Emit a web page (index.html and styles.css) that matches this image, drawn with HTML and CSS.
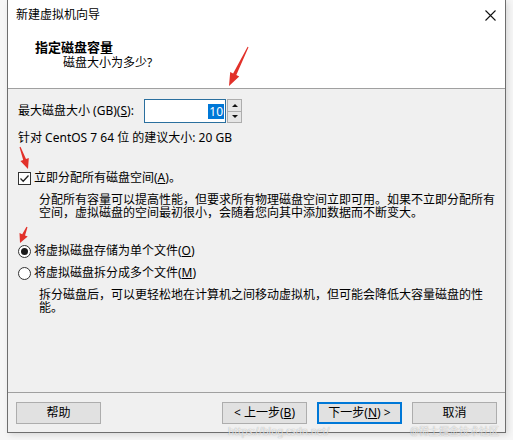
FILE: index.html
```html
<!DOCTYPE html>
<html lang="zh-CN">
<head>
<meta charset="utf-8">
<title>新建虚拟机向导</title>
<link rel="stylesheet" href="styles.css">
</head>
<body>
<div class="window">
  <div class="titlebar">
    <span class="title">新建虚拟机向导</span>
    <svg class="close" width="11" height="11" viewBox="0 0 11 11"><path d="M0.5 0.5 L10.5 10.5 M10.5 0.5 L0.5 10.5" stroke="#111" stroke-width="1.1" fill="none"/></svg>
  </div>
  <div class="header">
    <div class="h-title">指定磁盘容量</div>
    <div class="h-sub">磁盘大小为多少?</div>
  </div>
  <div class="content">
    <div class="size-row">
      <label class="size-label">最大磁盘大小 (GB)(<u>S</u>):</label>
      <div class="edit"><span class="sel">10</span></div>
      <div class="spin-btns"><span class="up"></span><span class="down"></span></div>
    </div>
    <div class="hint">针对 CentOS 7 64 位 的建议大小: 20 GB</div>
    <div class="option check-row">
      <span class="checkbox"><svg width="11" height="11" viewBox="0 0 11 11"><path d="M1.5 5.5 L4.2 8.2 L9.5 2.5" stroke="#222" stroke-width="1.3" fill="none"/></svg></span>
      <span>立即分配所有磁盘空间(<u>A</u>)。</span>
    </div>
    <p class="desc">分配所有容量可以提高性能，但要求所有物理磁盘空间立即可用。如果不立即分配所有<br>空间，虚拟磁盘的空间最初很小，会随着您向其中添加数据而不断变大。</p>
    <div class="option radio-row first">
      <span class="radio on"></span>
      <span>将虚拟磁盘存储为单个文件(<u>O</u>)</span>
    </div>
    <div class="option radio-row">
      <span class="radio"></span>
      <span>将虚拟磁盘拆分成多个文件(<u>M</u>)</span>
    </div>
    <p class="desc">拆分磁盘后，可以更轻松地在计算机之间移动虚拟机，但可能会降低大容量磁盘的性<br>能。</p>
  </div>
  <div class="footer">
    <button class="btn">帮助</button>
    <button class="btn back">&lt; 上一步(<u>B</u>)</button>
    <button class="btn primary">下一步(<u>N</u>) &gt;</button>
    <button class="btn">取消</button>
  </div>
</div>
<svg class="annotations" width="513" height="440" viewBox="0 0 513 440">
  <polygon fill="#e2312a" points="248.5,47.2 236.3,75.1 239.2,76.5 229,86 230.2,72.1 233.1,73.5 247.6,46.8"/>
  <polygon fill="#e2312a" points="20.5,146.8 26,159.1 28.8,158.1 28,169 20.4,161.1 23.2,160.1 19.5,147.2"/>
  <polygon fill="#e2312a" points="27.5,227.2 25,235.4 27.7,236.6 20,243 19.5,233 22.2,234.2 26.5,226.8"/>
</svg>
<div class="watermark"><span class="wm-url">https://blog.csdn.net/</span><span class="wm-brand">@稀土掘金技术社区</span></div>
</body>
</html>
```
FILE: styles.css
```css
* { box-sizing: border-box; }

body {
  margin: 0;
  width: 513px;
  height: 440px;
  overflow: hidden;
  position: relative;
  background: #f6f6f6;
  font-family: "Noto Sans", "Noto Sans CJK SC", sans-serif;
  font-size: 12px;
  color: #000;
}

.window {
  margin-left: 7px;
  width: 499px;
  height: 433px;
  border: 1px solid #6e6e6e;
  border-top: none;
  background: #f0f0f0;
  display: flex;
  flex-direction: column;
  box-shadow: 2px 2px 6px rgba(0, 0, 0, 0.12);
}

.titlebar {
  height: 30px;
  background: #fff;
  display: flex;
  align-items: center;
  justify-content: space-between;
  padding: 0 9px 0 8px;
  line-height: 16px;
}

.close { display: block; }

.header {
  height: 59px;
  background: #fff;
  border-bottom: 1px solid #a0a0a0;
  padding: 9px 0 0 27px;
}

.h-title {
  font-weight: bold;
  font-size: 13px;
  line-height: 16px;
}

.h-sub {
  margin-left: 28px;
  line-height: 16px;
}

.content {
  flex: 1;
  padding: 10px 0 0 10px;
}

.size-row {
  display: flex;
  align-items: center;
  height: 24px;
}

.size-label {
  flex: 0 0 126px;
  line-height: 16px;
}

.edit {
  width: 82px;
  height: 24px;
  border: 1px solid #2a6f9e;
  background: #fff;
  display: flex;
  align-items: center;
  justify-content: flex-end;
  padding-right: 1px;
}

.sel {
  background: #0078d7;
  color: #fff;
  line-height: 15px;
  padding: 0 1px;
}

.spin-btns {
  width: 15px;
  height: 24px;
  margin-left: 1px;
  display: flex;
  flex-direction: column;
}

.spin-btns span {
  flex: 1;
  border: 1px solid #adadad;
  background: #e6e6e6;
  display: flex;
  align-items: center;
  justify-content: center;
}

.spin-btns .down { border-top: none; }

.up::after {
  content: "";
  border-left: 3px solid transparent;
  border-right: 3px solid transparent;
  border-bottom: 3px solid #111;
}

.down::after {
  content: "";
  border-left: 3px solid transparent;
  border-right: 3px solid transparent;
  border-top: 3px solid #111;
}

.hint {
  margin-top: 7px;
  line-height: 16px;
}

.option {
  display: flex;
  align-items: center;
  gap: 3px;
  line-height: 16px;
}

.check-row { margin-top: 24px; }

.checkbox {
  width: 13px;
  height: 13px;
  border: 1px solid #333;
  background: #fff;
  display: flex;
  align-items: center;
  justify-content: center;
}

.checkbox svg { display: block; }

.radio-row { margin-top: 6px; }
.radio-row.first { margin-top: 24px; }

.radio {
  width: 13px;
  height: 13px;
  border: 1px solid #333;
  border-radius: 50%;
  background: #fff;
  display: flex;
  align-items: center;
  justify-content: center;
}

.radio.on::after {
  content: "";
  width: 7px;
  height: 7px;
  border-radius: 50%;
  background: #1a1a1a;
}

.desc {
  margin: 7px 0 0 21px;
  line-height: 13px;
  white-space: nowrap;
}

.footer {
  height: 40px;
  border-top: 1px solid #a0a0a0;
  padding: 9px 8px 0 8px;
  display: flex;
  align-items: flex-start;
  gap: 10px;
}

.btn {
  width: 85px;
  height: 22px;
  padding: 0;
  border: 1px solid #adadad;
  background: #e1e1e1;
  font: inherit;
  line-height: 20px;
  color: #000;
  text-align: center;
}

.btn.back { margin-left: auto; }

.btn.primary {
  border-color: #0078d7;
  box-shadow: inset 0 0 0 1px #0078d7;
}

.annotations {
  position: absolute;
  left: 0;
  top: 0;
  pointer-events: none;
}

.watermark {
  position: absolute;
  left: 0;
  top: 425px;
  width: 513px;
  height: 12px;
  pointer-events: none;
  font-size: 10px;
  line-height: 12px;
  color: rgba(255, 255, 255, 0.8);
  text-shadow: 0 0 1px rgba(0, 0, 0, 0.4);
}

.wm-url {
  position: absolute;
  left: 228px;
}

.wm-brand {
  position: absolute;
  left: 410px;
}
```
